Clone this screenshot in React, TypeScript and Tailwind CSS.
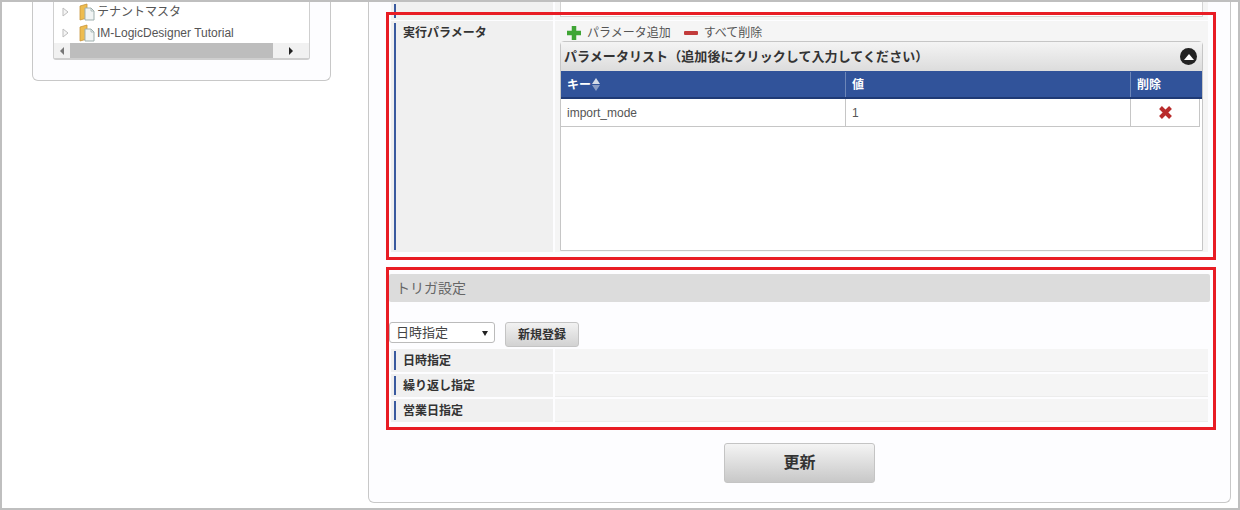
import React from 'react';

const FolderIcon = () => (
    <svg width="16" height="18" viewBox="0 0 16 18" className="shrink-0">
        <path d="M1 3 L8 1 L8 15 L1 17 Z" fill="#eebc4f" stroke="#c8963a" strokeWidth="0.8" />
        <path d="M6 5 H12 L15 8 V17 H6 Z" fill="#f1f4f4" stroke="#9fb0ae" strokeWidth="1" />
        <path d="M12 5 V8 H15" fill="none" stroke="#9fb0ae" strokeWidth="0.8" />
    </svg>
);

const TreeArrow = () => (
    <svg width="7" height="10" viewBox="0 0 7 10" className="shrink-0">
        <path d="M1 1 L6 5 L1 9 Z" fill="#f5f5f5" stroke="#bdbdbd" strokeWidth="1" />
    </svg>
);

const TreeRow = ({ label, className }: { label: string; className: string }) => (
    <div className={`flex items-center pl-[8px] ${className}`}>
        <TreeArrow />
        <span className="ml-[10px]"><FolderIcon /></span>
        <span className="ml-[2px] text-[12px] text-[#555]">{label}</span>
    </div>
);

const Sidebar = () => (
    <aside className="w-[299px] h-[79px] ml-[30px] shrink-0 bg-[#fdfdff] border-x border-b border-[#c8c8c8] rounded-b-[6px] px-5">
        <div className="h-[58px] bg-white border-x border-b-2 border-[#cfcfcf] rounded-b-[3px] overflow-hidden">
            <TreeRow label="テナントマスタ" className="h-[20px]" />
            <TreeRow label="IM-LogicDesigner Tutorial" className="h-[21px]" />
            <div className="flex items-center h-[15px] bg-[#f1f1f1]">
                <div className="w-[16px] flex justify-center">
                    <div className="border-y-[4px] border-r-[4px] border-y-transparent border-r-[#777]" />
                </div>
                <div className="w-[203px] h-full bg-[#bdbdbd]" />
                <div className="flex-1 flex justify-center">
                    <div className="border-y-[4px] border-l-[4px] border-y-transparent border-l-[#222]" />
                </div>
            </div>
        </div>
    </aside>
);

const LabelCell = ({ label, className }: { label: string; className: string }) => (
    <div className={`w-[162px] shrink-0 bg-[#f0f0f0] pl-[3px] py-[2px] ${className}`}>
        <div className="h-full border-l-2 border-[#3a5a9f] pl-[7px] text-[12px] font-bold text-[#333]">
            {label}
        </div>
    </div>
);

const SortArrows = () => (
    <span className="ml-[1px] flex flex-col gap-[1px]">
        <span className="border-x-[4px] border-b-[6px] border-x-transparent border-b-[#d5dbe8]" />
        <span className="border-x-[4px] border-t-[6px] border-x-transparent border-t-[#8a9cc4]" />
    </span>
);

const ParameterList = () => (
    <div className="h-[210px] mx-[5px] bg-white border border-[#c6c6c6] rounded-t-[4px]">
        <div className="flex items-center justify-between h-[29px] pl-[3px] pr-[5px] bg-gradient-to-b from-[#f4f4f4] to-[#dcdcdc]">
            <span className="text-[13px] font-bold tracking-[0.07px] text-[#333]">パラメータリスト（追加後にクリックして入力してください）</span>
            <span className="flex items-center justify-center w-[17px] h-[17px] rounded-full bg-[#222]">
                <span className="border-x-[5px] border-b-[6px] border-x-transparent border-b-white" />
            </span>
        </div>
        <div className="flex h-[28px] pt-[1px] bg-[#31539a] border-b-2 border-[#1f3a75] text-[12px] font-bold text-white">
            <div className="flex items-center w-[284px] pl-[6px]">キー<SortArrows /></div>
            <div className="flex items-center w-[285px] pl-[6px] border-l border-[#6d86b8]">値</div>
            <div className="flex items-center flex-1 pl-[6px] border-l border-[#6d86b8]">削除</div>
        </div>
        <div className="flex h-[28px] mr-[2px] border-b border-[#c6c6c6] text-[12px] text-[#555]">
            <div className="flex items-center w-[284px] pl-[6px]">import_mode</div>
            <div className="flex items-center w-[285px] pl-[6px] border-l border-[#c6c6c6]">1</div>
            <div className="flex items-center justify-center flex-1 border-x border-[#c6c6c6]">
                <svg width="13" height="13" viewBox="0 0 13 13">
                    <path d="M1.5 1.5 L11.5 11.5 M11.5 1.5 L1.5 11.5" stroke="#b92c2c" strokeWidth="4" />
                </svg>
            </div>
        </div>
    </div>
);

const TriggerRow = ({ label, className }: { label: string; className: string }) => (
    <div className={`flex gap-[2px] ${className}`}>
        <LabelCell label={label} className="h-[23px] leading-[20px]" />
        <div className="flex-1 bg-[#f5f5f5] border-b border-[#ececec]" />
    </div>
);

const MainPanel = () => (
    <main className="w-[863px] h-[501px] ml-[37px] shrink-0 bg-[#fdfdff] border-x border-b border-[#c8c8c8] rounded-b-[6px] pl-[22px] pr-[22px]">
        <div className="flex gap-[2px] h-[18px]">
            <LabelCell label="" className="h-full" />
            <div className="flex-1 bg-[#f5f5f5]">
                <div className="h-[15px] mx-[5px] bg-white border-x border-b border-[#d4d4d4]" />
            </div>
        </div>
        <div className="flex gap-[2px] h-[231px] mt-[1px]">
            <LabelCell label="実行パラメータ" className="h-full leading-[20px]" />
            <div className="flex-1 bg-[#f5f5f5] pt-[3px]">
                <div className="flex items-center h-[17px] pl-[12px] text-[12px] text-[#555]">
                    <svg width="14" height="14" viewBox="0 0 14 14">
                        <path d="M7 0 V14 M0 7 H14" stroke="#3fa535" strokeWidth="4.5" />
                    </svg>
                    <span className="ml-[6px]">パラメータ追加</span>
                    <span className="ml-[13px] w-[14px] h-[4px] rounded-[1px] bg-[#c23b3b]" />
                    <span className="ml-[6px]">すべて削除</span>
                </div>
                <ParameterList />
            </div>
        </div>
        <div className="h-[28px] mt-[22px] -ml-[2px] w-[821px] pl-[7px] bg-[#dcdcdc] rounded-[2px] text-[14px] leading-[29px] text-[#666]">
            トリガ設定
        </div>
        <div className="flex items-start h-[27px] mt-[20px] -ml-[2px]">
            <div className="flex items-center justify-between w-[106px] h-[21px] pl-[6px] pr-[6px] pt-[1px] bg-white border border-[#bbb] rounded-[3px] text-[13px] text-[#444]">
                日時指定
                <span className="border-x-[3px] border-t-[5px] border-x-transparent border-t-[#222]" />
            </div>
            <button className="ml-[10px] w-[74px] h-[25px] bg-gradient-to-b from-[#f2f2f2] to-[#d2d2d2] border border-[#c4c4c4] rounded-[3px] text-[12px] font-bold text-[#333]">
                新規登録
            </button>
        </div>
        <TriggerRow label="日時指定" className="" />
        <TriggerRow label="繰り返し指定" className="mt-[2px]" />
        <TriggerRow label="営業日指定" className="mt-[2px]" />
        <div className="flex justify-center mt-[21px]">
            <button className="w-[151px] h-[40px] bg-gradient-to-b from-[#f4f4f4] to-[#c8c8c8] border border-[#c4c4c4] rounded-[3px] text-[16px] font-bold text-[#333]">
                更新
            </button>
        </div>
    </main>
);

export default function App() {
    return (
        <div className="relative flex items-start w-[1240px] h-[510px] overflow-hidden bg-white border-2 border-[#bfbfbf] font-['Liberation_Sans','Noto_Sans_CJK_JP',sans-serif]">
            <Sidebar />
            <MainPanel />
            {/* red callouts drawn over the screenshot */}
            <div className="absolute left-[384px] top-[10px] w-[830px] h-[248px] border-[3px] border-[#e81c24]" />
            <div className="absolute left-[384px] top-[265px] w-[830px] h-[163px] border-[3px] border-[#e81c24]" />
        </div>
    );
}
